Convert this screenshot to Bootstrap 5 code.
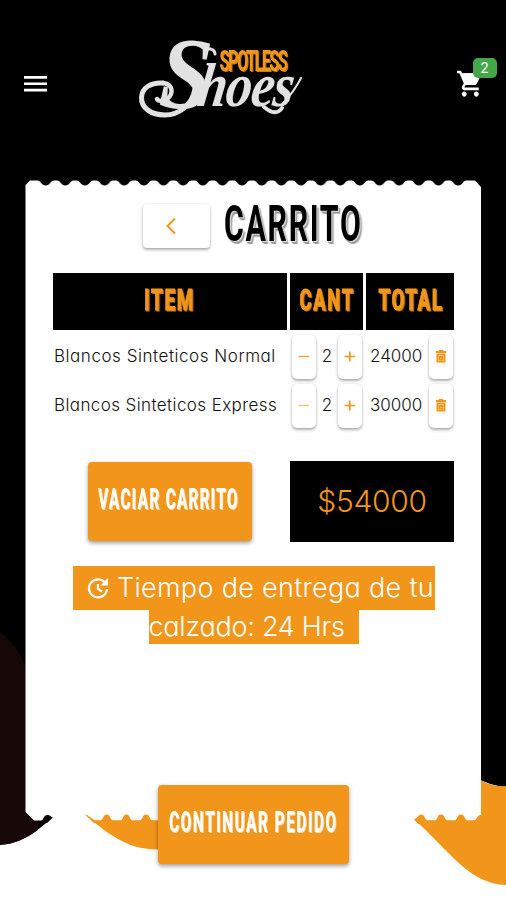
<!DOCTYPE html>
<html lang="es">
<head>
<meta charset="utf-8">
<meta name="viewport" content="width=device-width, initial-scale=1">
<title>Spotless Shoes - Carrito</title>
<link href="https://cdn.jsdelivr.net/npm/bootstrap@5.3.0/dist/css/bootstrap.min.css" rel="stylesheet">
<style>
:root{--brand:#f1961b}
body{font-family:Inter,"Open Sans",sans-serif;font-weight:300;font-feature-settings:"cv11";color:#111;background:#fff}
svg{display:block;overflow:visible}
.screen{width:506px;height:900px}
.topbar{height:180px;padding:37px 10px 0 24px}
.menu-btn{margin-top:39px;width:115px}
.cart-btn{margin:33px 13px 0 auto}
.cart-count{left:15.500px;top:-12px;width:24px;height:20px;border-radius:5px;background:#43a847;font-size:14px;font-weight:400;line-height:20px}
.ticket{width:402px;margin-left:53px;padding-top:24px}
.ticket-head{padding-left:90px;height:44px}
.raised{background:#fff;border:0;border-radius:4px;box-shadow:0 2px 3px rgba(0,0,0,.3),0 0 2px rgba(0,0,0,.14)}
.back-btn{width:67px;height:44px}
.display-type{font-family:Roboto,sans-serif;font-weight:700;font-feature-settings:normal}
.sh-title{filter:drop-shadow(2px 1.500px 0 #ddd) drop-shadow(2px 2px 0 #999)}
.sh-orange{fill:var(--brand);filter:drop-shadow(2px 1px 0 #c97b14)}
.sh-white{fill:#fff;filter:drop-shadow(2.500px 1.500px 0 #fbdcb4)}
.cart-grid{display:grid;grid-template-columns:234px 73px 88px;column-gap:3px;margin-top:25px}
.cart-grid>.head{background:#000;height:57px;padding-top:15px}
.cart-grid>.cell{height:49px;padding-top:5px}
.item-name{font-size:17px;line-height:43px;padding-left:1px}
.n1{letter-spacing:.54px}
.n2{letter-spacing:.4px}
.num{font-size:17px;line-height:43px}
.step-btn{width:24px;height:44px;border-radius:5px}
.qty{padding:0 1px 0 2px}
.line-total{padding:0 1px 0 4px}
.buy-btn{background:var(--brand);border:0;border-radius:4px;box-shadow:0 2px 4px rgba(0,0,0,.4);height:79px}
.totals{margin-top:33px;padding-left:35px}
.grand{width:164px;height:81px;margin-left:38px;background:#000;color:var(--brand);font-size:30px;letter-spacing:-.3px}
.eta{margin:24px 0 0 20px;width:362px;color:#fff;font-size:27px}
.eta>div{background:var(--brand);white-space:nowrap}
.eta-1{height:44px;width:362px;padding-left:14px}
.eta-2{height:34px;width:210px;margin-left:75.500px;line-height:33px}
.e1{margin-left:8px;letter-spacing:.3px}
.e2{letter-spacing:-.25px}
.continue-btn{margin:141px 0 0 105px}
</style>
</head>
<body>
<div class="screen position-relative overflow-hidden">
  <svg class="position-absolute top-0 start-0" width="506" height="900" viewBox="0 0 506 900" aria-hidden="true">
    <defs>
      <pattern id="teeth" x="35.900" y="178" width="19.640" height="10" patternUnits="userSpaceOnUse">
        <path d="M2 0V2.200C5 3 5.500 7.500 9.800 7.500S14.500 3 17.600 2.200V0Z" fill="#000"/>
      </pattern>
    </defs>
    <path d="M0 0H506V787Q490 786 470 775L53 817Q24 844 0 845Z" fill="#000"/>
    <path d="M0 632Q16 643 25 665L38 800V830Q18 845 0 844.500Z" fill="#150806"/>
    <path d="M85 815C108 833 125 849 157 849.500L180 849V800H85ZM414 819C450 852 470 884 506 885V786Q492 787 480 780L414 800Z" fill="#f1961b"/>
    <path d="M25.500 185L30 180.500H475L481 187V816Q477 820.500 474 820.500H34L25.500 812Z" fill="#fff"/>
    <rect x="36" y="178" width="431.800" height="10" fill="url(#teeth)"/>
    <path d="M41 821C44 820 43 815 47.600 815C50 815 51 817 52.800 817.500L47 823Z" fill="#000"/>
    <g fill="#f1961b">
      <path d="M85 814.500Q87 814 90 817L95 820.500H100.500C103.500 820 103 814.500 106.700 814.500S110 820 113 820.500H120.500C123.500 820 122.500 814.500 126.400 814.500S129.500 820 132.500 820.500H140C143 820 142 814.500 146 814.500S149.500 820 152.500 820.500H158V823H94Z"/>
      <path d="M414 819.500C418 818 418 814.500 421.500 814.500S424.500 820 427.500 820.500H435C438 820 437 814.500 441 814.500S444.500 820 447.500 820.500H454.500C457.500 820 457 814.500 461 814.500S464.500 820 467.500 820.500H474C477 820 477 815 481.500 814.500V824H418Z"/>
    </g>
  </svg>

  <div class="position-relative">
    <header class="topbar d-flex align-items-start">
      <div class="menu-btn" role="button" aria-label="Menu">
        <svg width="23" height="16" viewBox="0 0 23 16" fill="#fff"><path d="M0 0H23V2.700H0ZM0 6.400H23V9.100H0ZM0 12.800H23V15.500H0Z"/></svg>
      </div>
      <svg width="163" height="82" viewBox="0 0 163 82" role="img" aria-label="Spotless Shoes">
        <g fill="#e2e2e2" font-family="'Liberation Serif',serif" font-style="italic" font-weight="700">
          <text transform="translate(19 70) rotate(3) scale(.92 1)" font-size="103">S</text>
          <text transform="translate(57 69) skewX(-8) scale(.84 1)" font-size="62" letter-spacing="-1">hoes</text>
        </g>
        <g fill="none" stroke="#e2e2e2" stroke-linecap="round">
          <path d="M56 52C53 69 39 78 26 78C12 78 2 71 2.500 60C3 51 12 45 24 46" stroke-width="5"/>
          <path d="M24 46C34 47 35 57 28 62C24 65 19 64 18 62" stroke-width="4.500"/>
          <path d="M66 12Q76 11 76 17" stroke-width="3"/>
          <path d="M144 66Q155 55 162 41" stroke-width="2"/>
          <path d="M125 70Q137 80 143 71" stroke-width="4"/>
        </g>
        <text class="display-type sh-orange" transform="translate(80.500 34) scale(.56 1)" font-size="29" textLength="122">SPOTLESS</text>
      </svg>
      <div class="cart-btn position-relative" role="button" aria-label="Carrito">
        <svg width="26" height="28" viewBox="1 1.500 21.500 21.500" preserveAspectRatio="none" fill="#fff"><path d="M7 18c-1.100 0-2 .9-2 2s.9 2 2 2 2-.9 2-2-.9-2-2-2zM1 2v2h2l3.600 7.590-1.350 2.450c-.16.280-.25.610-.25.960 0 1.100.9 2 2 2h12v-2H7.420c-.14 0-.25-.11-.25-.25l.03-.12.900-1.630h7.450c.75 0 1.410-.41 1.750-1.030l3.580-6.490A1 1 0 0 0 20 4H5.210l-.94-2H1zm16 16c-1.100 0-2 .9-2 2s.9 2 2 2 2-.9 2-2-.9-2-2-2z"/><path d="M6 4H20L16 12H9Z"/></svg>
        <span class="cart-count position-absolute text-white text-center">2</span>
      </div>
    </header>

    <main class="ticket">
      <div class="ticket-head d-flex">
        <button class="raised back-btn p-0" aria-label="Volver"><svg width="67" height="44" fill="none" stroke="#f1961b" stroke-width="2"><path d="M32 14.500L24.500 22L32 29.500"/></svg></button>
        <h1 class="m-0 ms-3"><svg class="display-type" width="138" height="44"><text class="sh-title" transform="translate(-2 37) scale(.6 1)" font-size="50.500" textLength="228">CARRITO</text></svg></h1>
      </div>

      <div class="cart-grid">
        <div class="head"><svg class="display-type" width="234" height="30"><text class="sh-orange" transform="translate(91 22) scale(.62 1)" font-size="30" textLength="79" stroke="#f1961b">ITEM</text></svg></div>
        <div class="head"><svg class="display-type" width="73" height="30"><text class="sh-orange" transform="translate(9.500 22) scale(.6 1)" font-size="30" textLength="89" stroke="#f1961b">CANT</text></svg></div>
        <div class="head"><svg class="display-type" width="88" height="30"><text class="sh-orange" transform="translate(12.500 22) scale(.62 1)" font-size="30" textLength="102" stroke="#f1961b">TOTAL</text></svg></div>

        <div class="cell item-name text-nowrap"><span class="n1">Blancos Sinteticos Normal</span></div>
        <div class="cell"><div class="qty d-flex justify-content-between">
          <button class="raised step-btn p-0" aria-label="Restar"><svg width="24" height="44" stroke="#f1961b" stroke-width="1.200"><path d="M6.500 21.500H17"/></svg></button>
          <span class="num">2</span>
          <button class="raised step-btn p-0" aria-label="Sumar"><svg width="24" height="44" stroke="#f1961b" stroke-width="1.700"><path d="M6.500 21.500H17M11.750 16.500V26.500"/></svg></button>
        </div></div>
        <div class="cell"><div class="line-total d-flex justify-content-between">
          <span class="num">24000</span>
          <button class="raised step-btn p-0" aria-label="Eliminar"><svg width="24" height="44" fill="none" stroke="#f1961b" stroke-width="1.800"><path d="M7 17H17M10 15.800H14M8.400 19.500H15.600V26.700H8.400ZM10.500 22H13.500V24.500H10.500Z"/></svg></button>
        </div></div>

        <div class="cell item-name text-nowrap"><span class="n2">Blancos Sinteticos Express</span></div>
        <div class="cell"><div class="qty d-flex justify-content-between">
          <button class="raised step-btn p-0" aria-label="Restar"><svg width="24" height="44" stroke="#f6b869" stroke-width="1.200"><path d="M6.500 21.500H17"/></svg></button>
          <span class="num">2</span>
          <button class="raised step-btn p-0" aria-label="Sumar"><svg width="24" height="44" stroke="#f1961b" stroke-width="1.700"><path d="M6.500 21.500H17M11.750 16.500V26.500"/></svg></button>
        </div></div>
        <div class="cell"><div class="line-total d-flex justify-content-between">
          <span class="num">30000</span>
          <button class="raised step-btn p-0" aria-label="Eliminar"><svg width="24" height="44" fill="none" stroke="#f1961b" stroke-width="1.800"><path d="M7 17H17M10 15.800H14M8.400 19.500H15.600V26.700H8.400ZM10.500 22H13.500V24.500H10.500Z"/></svg></button>
        </div></div>
      </div>

      <div class="totals d-flex align-items-center">
        <button class="buy-btn p-0"><svg class="display-type" width="164" height="79"><text class="sh-white" transform="translate(10 46.500) scale(.53 1)" font-size="29" textLength="263">VACIAR CARRITO</text></svg></button>
        <div class="grand d-flex align-items-center justify-content-center"><span>$54000</span></div>
      </div>

      <div class="eta">
        <div class="eta-1 d-flex align-items-center">
          <svg width="22" height="24" fill="none" stroke="#fff" stroke-width="2.200"><path d="M18.600 7.500A9 9 0 1 0 20 13M11 8V13L15 15.500"/><path d="M21 2V9.500H13.500Z" fill="#fff" stroke="none"/></svg>
          <span class="e1">Tiempo de entrega de tu</span>
        </div>
        <div class="eta-2"><span class="e2">calzado: 24 Hrs</span></div>
      </div>

      <button class="buy-btn p-0 continue-btn"><svg class="display-type" width="191" height="79"><text class="sh-white" transform="translate(11 46.500) scale(.53 1)" font-size="29" textLength="315">CONTINUAR PEDIDO</text></svg></button>
    </main>
  </div>
</div>
<script src="https://cdn.jsdelivr.net/npm/bootstrap@5.3.0/dist/js/bootstrap.bundle.min.js"></script>
</body>
</html>
